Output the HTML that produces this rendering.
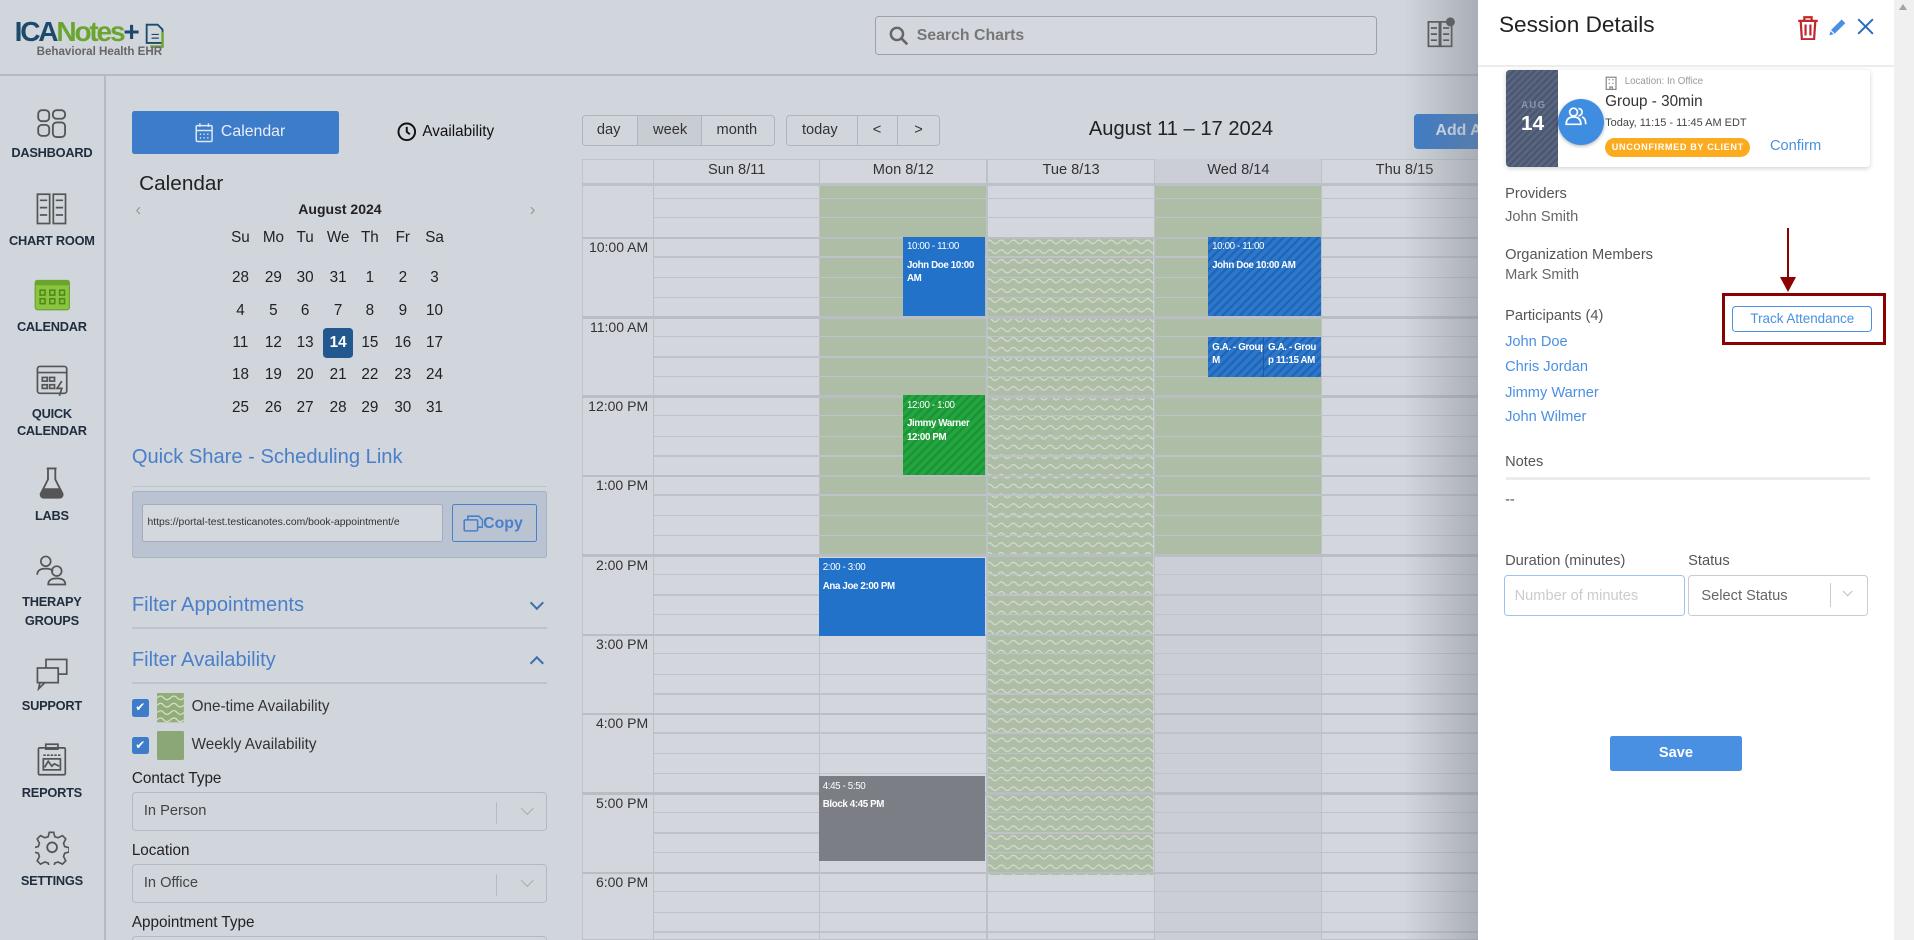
<!DOCTYPE html>
<html><head><meta charset="utf-8"><style>
*{box-sizing:border-box;margin:0;padding:0}
html,body{width:1914px;height:940px;overflow:hidden;background:#d1d5dc}
#w{zoom:1.22066;width:1568px;height:770px;position:relative;font-family:"Liberation Sans",sans-serif;color:#222;background:#d1d5dc;overflow:hidden}
.a{position:absolute}
.nav{position:absolute;left:0;width:85px;text-align:center;font-size:10.5px;color:#1f2d3d;font-weight:bold;letter-spacing:-.2px}
.nav svg{display:block;margin:0 auto 6px}
.md{position:absolute;width:26px;text-align:center;font-size:12.5px;color:#222}
.blue{color:#4a7fc9}
.sel{position:absolute;left:108px;width:340px;height:32px;border:1px solid #b5bac2;border-radius:3px;font-size:12px;color:#444;padding:8px 9px}
.sel:after{content:"";position:absolute;right:40px;top:7px;height:18px;border-left:1px solid #b5bac2}
.chev{position:absolute;right:12px;top:9px;width:7px;height:7px;border-right:1.5px solid #aaa;border-bottom:1.5px solid #aaa;transform:rotate(45deg)}
.hl{position:absolute;width:760px;height:1px}
.ev{position:absolute;color:#fff;font-size:8px;padding:3px;font-weight:bold;letter-spacing:-.3px;line-height:11px}
.ev i{font-style:normal;font-weight:normal;display:block;margin-bottom:4px}
.pl{position:absolute;left:1233px;font-size:12px;color:#555}
</style></head><body><div id="w">
<!-- header -->
<div class="a" style="left:0;top:61px;width:1211px;height:1px;background:#b5b9c0"></div>
<div class="a" style="left:12px;top:13px;font-size:23px;font-weight:bold;letter-spacing:-1.8px;color:#1b4a6b">ICA<span style="color:#6aa52f">Notes</span>+</div>
<svg class="a" style="left:117px;top:17px" width="20" height="22"><path d="M3 3h9l4 4v11H3z" fill="#d1d5dc" stroke="#1b4a6b" stroke-width="1.5"/><path d="M7 11h6M7 14h6" stroke="#1b4a6b"/><path d="M16 9v12H6" fill="none" stroke="#6aa52f" stroke-width="2"/></svg>
<div class="a" style="left:30px;top:38px;font-size:9.5px;color:#666;font-weight:bold">Behavioral Health EHR</div>
<div class="a" style="left:717px;top:13px;width:411px;height:32px;border:1px solid #9ca2ab;border-radius:3px;background:#d4d8de"></div>
<svg class="a" style="left:728px;top:21px" width="16" height="16"><circle cx="6.5" cy="6.5" r="5" fill="none" stroke="#666" stroke-width="2"/><path d="M10 10l5 5" stroke="#666" stroke-width="2.2"/></svg>
<div class="a" style="left:751px;top:22px;font-size:13px;color:#777;font-weight:bold">Search Charts</div>
<svg class="a" style="left:1168px;top:14px" width="24" height="26" fill="none" stroke="#555" stroke-width="1.4"><rect x="2" y="4" width="9" height="20"/><rect x="12" y="4" width="9" height="20"/><path d="M4 9h5M4 14h5M4 19h5M14 9h5M14 14h5M14 19h5"/><circle cx="20" cy="4" r="3" fill="#555"/></svg>
<!-- left nav -->
<div class="a" style="left:85px;top:62px;width:2px;height:708px;background:#b5b9c0"></div>
<div class="nav" style="top:89px"><svg width="24" height="24" fill="none" stroke="#555" stroke-width="1.5"><rect x="1" y="1" width="9" height="9" rx="3"/><rect x="13" y="1" width="10" height="7" rx="3"/><rect x="1" y="13" width="9" height="9" rx="3"/><rect x="13" y="11" width="10" height="12" rx="3"/></svg>DASHBOARD</div>
<div class="nav" style="top:158px"><svg width="28" height="27" fill="none" stroke="#555" stroke-width="1.4"><rect x="2" y="1" width="10" height="24"/><rect x="15" y="1" width="10" height="24"/><path d="M4 6h6M4 12h6M4 18h6M17 6h6M17 12h6M17 18h6"/></svg>CHART ROOM</div>
<div class="nav" style="top:228px"><svg width="30" height="27"><rect x="1" y="2" width="28" height="24" rx="2" fill="#8cc43f" stroke="#6aa52f"/><rect x="1" y="2" width="28" height="4" fill="#6aa52f"/><g fill="none" stroke="#4d8a1c" stroke-width="1.3"><rect x="5" y="10" width="4" height="4"/><rect x="13" y="10" width="4" height="4"/><rect x="21" y="10" width="4" height="4"/><rect x="5" y="17" width="4" height="4"/><rect x="13" y="17" width="4" height="4"/><rect x="21" y="17" width="4" height="4"/></g></svg>CALENDAR</div>
<div class="nav" style="top:298px;line-height:14px"><svg width="28" height="28" fill="none" stroke="#555" stroke-width="1.4"><rect x="2" y="2" width="24" height="22" rx="2"/><path d="M2 7h24"/><rect x="6" y="11" width="4" height="3"/><rect x="12" y="11" width="4" height="3"/><rect x="6" y="17" width="4" height="3"/><rect x="12" y="17" width="4" height="3"/><path d="M22 14l-4 6h4l-2 6"/></svg>QUICK<br>CALENDAR</div>
<div class="nav" style="top:382px"><svg width="24" height="28" fill="none" stroke="#555" stroke-width="1.5"><path d="M8 2h8M9 2v9L3 23q0 3 3 3h12q3 0 3-3L15 11V2"/><path d="M5 19h14l2 4q0 2-3 2H6q-3 0-3-2z" fill="#555"/></svg>LABS</div>
<div class="nav" style="top:454px;line-height:15px"><svg width="26" height="26" fill="none" stroke="#555" stroke-width="1.4"><circle cx="8" cy="6" r="4"/><path d="M1 17q0-5 7-5 4 0 6 2"/><circle cx="17" cy="14" r="4"/><path d="M10 25q0-5 7-5t7 5z"/></svg>THERAPY<br>GROUPS</div>
<div class="nav" style="top:538px"><svg width="28" height="28" fill="none" stroke="#555" stroke-width="1.4"><rect x="9" y="2" width="17" height="12"/><rect x="2" y="9" width="17" height="12" fill="#d1d5dc"/><path d="M4 21l-1 5 5-5"/></svg>SUPPORT</div>
<div class="nav" style="top:609px"><svg width="26" height="28" fill="none" stroke="#555" stroke-width="1.4"><rect x="2" y="4" width="22" height="22" rx="1"/><rect x="8" y="1" width="10" height="4"/><path d="M6 10h14" stroke-dasharray="2 1"/><rect x="6" y="13" width="14" height="9"/><path d="M7 20l3-5 3 4 2-2 4 2"/></svg>REPORTS</div>
<div class="nav" style="top:679px"><svg width="28" height="30" fill="none" stroke="#555" stroke-width="1.5"><path d="M12 2h4l1 4 3 1 4-2 3 3-2 4 1 3 4 1v4l-4 1-1 3 2 4-3 3-4-2-3 1-1 4h-4l-1-4-3-1-4 2-3-3 2-4-1-3-4-1v-4l4-1 1-3-2-4 3-3 4 2 3-1z" transform="scale(.9) translate(1 1)"/><circle cx="14" cy="15" r="4"/></svg>SETTINGS</div>
<!-- left panel -->
<div class="a" style="left:108px;top:91px;width:170px;height:35px;background:#3d7cc9;border-radius:2px;color:#e8eef8;font-size:13px;padding:10px 0 0 73px">Calendar</div>
<svg class="a" style="left:160px;top:100px" width="15" height="17" fill="none" stroke="#dfe8f5" stroke-width="1.2"><rect x="1" y="3" width="13" height="13" rx="1"/><path d="M1 7h13M4 1v3M11 1v3"/><path d="M4 10h1M7 10h1M10 10h1M4 13h1M7 13h1M10 13h1"/></svg>
<svg class="a" style="left:325px;top:100px" width="16" height="16" fill="none" stroke="#111" stroke-width="1.6"><circle cx="8" cy="8" r="6.8"/><path d="M8 4v4l2.5 2"/></svg>
<div class="a" style="left:346px;top:101px;font-size:12.5px;color:#111">Availability</div>
<div class="a" style="left:114px;top:141px;font-size:17px;color:#222">Calendar</div>
<div class="a" style="left:108px;top:165px;width:340px;text-align:center;font-size:11.5px;font-weight:bold;color:#222;padding-left:1px">August 2024</div>
<div class="a" style="left:111px;top:164px;font-size:14px;color:#999">‹</div>
<div class="a" style="left:434px;top:164px;font-size:14px;color:#999">›</div>
<div id="mc"></div>
<div class="a blue" style="left:108px;top:365px;font-size:16.5px">Quick Share - Scheduling Link</div>
<div class="a" style="left:108px;top:398px;width:340px;height:1px;background:#bfc4cc"></div>
<div class="a" style="left:108px;top:402px;width:340px;height:55px;background:#b9c3d2;border:1px solid #a9b2c0;border-radius:2px"></div>
<div class="a" style="left:116px;top:413px;width:247px;height:31px;background:#d3d7de;border:1px solid #aab;border-radius:2px;font-size:8.5px;padding:10px 4px;white-space:nowrap;overflow:hidden;color:#333">https://portal-test.testicanotes.com/book-appointment/e</div>
<div class="a" style="left:370px;top:413px;width:70px;height:31px;border:1px solid #4a7fc9;border-radius:2px;font-size:13px;color:#4a7fc9;padding:8px 0 0 25px;font-weight:bold">Copy</div>
<svg class="a" style="left:379px;top:422px" width="17" height="14" fill="none" stroke="#4a7fc9" stroke-width="1.3"><rect x="1" y="4" width="11" height="9" rx="1"/><path d="M4 4V1h9l3 3v6h-4"/></svg>
<div class="a blue" style="left:108px;top:487px;font-size:16.5px">Filter Appointments</div>
<div class="a" style="left:108px;top:514px;width:340px;height:1px;background:#bfc4cc"></div>
<div class="a" style="left:436px;top:490px;width:8px;height:8px;border-right:2px solid #3d6fae;border-bottom:2px solid #3d6fae;transform:rotate(45deg)"></div>
<div class="a blue" style="left:108px;top:532px;font-size:16.5px">Filter Availability</div>
<div class="a" style="left:108px;top:559px;width:340px;height:1px;background:#bfc4cc"></div>
<div class="a" style="left:436px;top:539px;width:8px;height:8px;border-left:2px solid #3d6fae;border-top:2px solid #3d6fae;transform:rotate(45deg)"></div>
<div class="a" style="left:108px;top:573px;width:14px;height:14px;background:#3d7cc9;border-radius:2px;color:#fff;font-size:10px;text-align:center;line-height:14px">✔</div>
<div class="a" style="left:108px;top:604px;width:14px;height:14px;background:#3d7cc9;border-radius:2px;color:#fff;font-size:10px;text-align:center;line-height:14px">✔</div>
<svg class="a" style="left:129px;top:568px" width="22" height="24"><rect width="22" height="24" fill="#93ad79"/><g fill="none" stroke="#d6e0cc" stroke-width="1"><path d="M0 4q3-3 5.5 0t5.5 0 5.5 0 5.5 0M0 10q3-3 5.5 0t5.5 0 5.5 0 5.5 0M0 16q3-3 5.5 0t5.5 0 5.5 0 5.5 0M0 22q3-3 5.5 0t5.5 0 5.5 0 5.5 0"/></g></svg>
<div class="a" style="left:129px;top:599px;width:22px;height:24px;background:#8ba677;border-radius:1px"></div>
<div class="a" style="left:157px;top:572px;font-size:12.5px;color:#333">One-time Availability</div>
<div class="a" style="left:157px;top:603px;font-size:12.5px;color:#333">Weekly Availability</div>
<div class="a" style="left:108px;top:631px;font-size:12.5px;color:#222">Contact Type</div>
<div class="sel" style="top:649px">In Person<span class="chev"></span></div>
<div class="a" style="left:108px;top:690px;font-size:12.5px;color:#222">Location</div>
<div class="sel" style="top:708px">In Office<span class="chev"></span></div>
<div class="a" style="left:108px;top:749px;font-size:12.5px;color:#222">Appointment Type</div>
<div class="sel" style="top:767px"></div>
<!-- calendar toolbar -->
<div class="a" style="left:477px;top:94px;width:158px;height:26px;border:1px solid #b0b5bd;border-radius:3px;font-size:12px;color:#333"></div>
<div class="a" style="left:522px;top:94px;width:53px;height:26px;background:#c8ccd3;border:1px solid #b0b5bd"></div>
<div class="a" style="left:489px;top:100px;font-size:12px;color:#333">day</div>
<div class="a" style="left:535px;top:100px;font-size:12px;color:#333">week</div>
<div class="a" style="left:587px;top:100px;font-size:12px;color:#333">month</div>
<div class="a" style="left:644px;top:94px;width:126px;height:26px;border:1px solid #b0b5bd;border-radius:3px"></div>
<div class="a" style="left:702px;top:94px;width:34px;height:26px;border-left:1px solid #b0b5bd;border-right:1px solid #b0b5bd"></div>
<div class="a" style="left:657px;top:100px;font-size:12px;color:#333">today</div>
<div class="a" style="left:715px;top:100px;font-size:12px;color:#333">&lt;</div>
<div class="a" style="left:749px;top:100px;font-size:12px;color:#333">&gt;</div>
<div class="a" style="left:892px;top:97px;font-size:16.5px;color:#222">August 11 – 17 2024</div>
<div class="a" style="left:1158px;top:93px;width:80px;height:29px;background:#3d7cc9;border-radius:3px;color:#dce7f5;font-size:13px;font-weight:bold;padding:7px 18px">Add A</div>
<!-- grid -->
<div class="a" style="left:477px;top:130px;width:760px;height:640px;background:#d3d6dc;border:1px solid #bfc3ca"></div>
<div class="a" style="left:945px;top:130px;width:137px;height:640px;background:#cbced6"></div>
<div class="a" style="left:671px;top:150px;width:137px;height:304px;background:#aebda6"></div>
<div class="a" style="left:945px;top:150px;width:137px;height:304px;background:#aebda6"></div>
<svg class="a" style="left:808px;top:194px" width="137" height="523"><defs><pattern id="wv" width="10" height="8" patternUnits="userSpaceOnUse"><rect width="10" height="8" fill="#aebda6"/><path d="M0 4q2.5-3 5 0t5 0" fill="none" stroke="#d5dccf" stroke-width="1"/></pattern></defs><rect width="137" height="523" fill="url(#wv)"/></svg>
<div id="lines"></div>
<div class="a" style="left:477px;top:150px;width:760px;height:2px;background:#bcc0c7"></div>
<div class="a" style="left:535px;top:130px;width:1px;height:640px;background:#bcc0c7"></div>
<div class="a" style="left:671px;top:130px;width:1px;height:640px;background:#bcc0c7"></div>
<div class="a" style="left:808px;top:130px;width:1px;height:640px;background:#bcc0c7"></div>
<div class="a" style="left:945px;top:130px;width:1px;height:640px;background:#bcc0c7"></div>
<div class="a" style="left:1082px;top:130px;width:1px;height:640px;background:#bcc0c7"></div>
<div class="a" style="left:580px;top:133px;font-size:12px;color:#333">Sun 8/11</div>
<div class="a" style="left:715px;top:133px;font-size:12px;color:#333">Mon 8/12</div>
<div class="a" style="left:854px;top:133px;font-size:12px;color:#333">Tue 8/13</div>
<div class="a" style="left:989px;top:133px;font-size:12px;color:#333">Wed 8/14</div>
<div class="a" style="left:1127px;top:133px;font-size:12px;color:#333">Thu 8/15</div>
<div id="tl"></div>
<div class="ev" style="left:740px;top:194px;width:67px;height:65px;background:#2272c9"><i>10:00 - 11:00</i>John Doe 10:00 AM</div>
<div class="ev" style="left:990px;top:194px;width:92px;height:65px;background:repeating-linear-gradient(135deg,#2e78cc 0 3px,#2066b8 3px 5px)"><i>10:00 - 11:00</i>John Doe 10:00 AM</div>
<div class="ev" style="left:990px;top:276px;width:50px;height:33px;background:repeating-linear-gradient(135deg,#2e78cc 0 3px,#2066b8 3px 5px);padding-top:3px">G.A. - Group M</div>
<div class="ev" style="left:1035px;top:276px;width:47px;height:33px;background:repeating-linear-gradient(135deg,#2e78cc 0 3px,#2066b8 3px 5px);padding-top:3px;border-left:1px solid #1d5aa0">G.A. - Grou p 11:15 AM</div>
<div class="ev" style="left:740px;top:324px;width:67px;height:65px;background:repeating-linear-gradient(135deg,#22a63f 0 3px,#1d9236 3px 5px)"><i>12:00 - 1:00</i>Jimmy Warner 12:00 PM</div>
<div class="ev" style="left:671px;top:457px;width:136px;height:64px;background:#2272c9"><i>2:00 - 3:00</i>Ana Joe 2:00 PM</div>
<div class="ev" style="left:671px;top:636px;width:136px;height:69px;background:#7b7e85"><i>4:45 - 5:50</i>Block 4:45 PM</div>
<div class="a" style="left:1150px;top:0;width:62px;height:770px;background:linear-gradient(90deg,rgba(120,125,135,0),rgba(120,125,135,.45))"></div>
<!-- side panel -->
<div class="a" style="left:1211px;top:0;width:342px;height:770px;background:#fff"></div>
<div class="a" style="left:1552px;top:0;width:16px;height:770px;background:#f0f0f0"></div>
<div class="a" style="left:1556px;top:3px;width:0;height:0;border:4px solid transparent;border-bottom:5px solid #a3a3a3;border-top:0"></div>
<div class="a" style="left:1228px;top:10px;font-size:18.5px;color:#222">Session Details</div>
<svg class="a" style="left:1472px;top:13px" width="18" height="20" fill="none" stroke="#c0272d" stroke-width="1.8"><path d="M1 4h16M6 4V1h6v3M3 4l1 15h10l1-15M7 7v9M11 7v9"/></svg>
<svg class="a" style="left:1497px;top:14px" width="17" height="17"><path d="M2 15l1-4 9-9 3 3-9 9z" fill="#4a90e2"/><path d="M3 11l3 3" stroke="#fff"/></svg>
<svg class="a" style="left:1521px;top:15px" width="14" height="14" stroke="#2a6bc0" stroke-width="1.6"><path d="M1 1l12 12M13 1L1 13"/></svg>
<div class="a" style="left:1211px;top:53px;width:341px;height:2px;background:#ececec"></div>
<div class="a" style="left:1234px;top:57px;width:298px;height:80px;background:#fff;box-shadow:0 1px 4px rgba(0,0,0,.18);border-radius:3px"></div>
<div class="a" style="left:1234px;top:57px;width:42px;height:80px;background:repeating-linear-gradient(135deg,#4b5670 0 2px,#5a6580 2px 4px);border-radius:3px 0 0 3px"></div>
<div class="a" style="left:1246px;top:82px;font-size:8px;color:#8b93a7;font-weight:bold;letter-spacing:1px">AUG</div>
<div class="a" style="left:1246px;top:92px;font-size:17px;color:#fff;font-weight:bold">14</div>
<div class="a" style="left:1276px;top:99px;width:38px;height:38px;margin-top:-18px;background:#3f8de0;border-radius:50%;box-shadow:0 1px 3px rgba(0,0,0,.3)"></div>
<svg class="a" style="left:1282px;top:87px" width="18" height="16" fill="none" stroke="#fff" stroke-width="1.4"><circle cx="7" cy="5" r="3.2"/><path d="M1 15q0-6 6-6t6 6zM11 2a3 3 0 0 1 0 6M14 9q3 1 3 6"/></svg>
<svg class="a" style="left:1315px;top:62px" width="10" height="12" fill="none" stroke="#888"><rect x="1" y="1" width="8" height="10"/><path d="M3 3h1M6 3h1M3 6h1M6 6h1M4 11V9h2v2"/></svg>
<div class="a" style="left:1331px;top:62px;font-size:8px;color:#999">Location: In Office</div>
<div class="a" style="left:1315px;top:76px;font-size:12.5px;color:#333">Group - 30min</div>
<div class="a" style="left:1315px;top:96px;font-size:9px;color:#444">Today, 11:15 - 11:45 AM EDT</div>
<div class="a" style="left:1315px;top:113px;width:119px;height:16px;background:#fbab1d;border-radius:8px;color:#fff;font-size:7.5px;font-weight:bold;text-align:center;line-height:16px;letter-spacing:.5px">UNCONFIRMED BY CLIENT</div>
<div class="a" style="left:1450px;top:113px;font-size:12px;color:#4a90e2">Confirm</div>
<div class="pl" style="top:152px">Providers</div>
<div class="pl" style="top:171px;color:#666">John Smith</div>
<div class="pl" style="top:202px">Organization Members</div>
<div class="pl" style="top:219px;color:#666">Mark Smith</div>
<div class="pl" style="top:252px">Participants (4)</div>
<div class="pl" style="top:274px;color:#4a90e2">John Doe</div>
<div class="pl" style="top:294px;color:#4a90e2">Chris Jordan</div>
<div class="pl" style="top:315px;color:#4a90e2">Jimmy Warner</div>
<div class="pl" style="top:335px;color:#4a90e2">John Wilmer</div>
<div class="a" style="left:1464px;top:187px;width:2px;height:42px;background:#8b0000"></div>
<div class="a" style="left:1458px;top:227px;width:0;height:0;border-left:7px solid transparent;border-right:7px solid transparent;border-top:13px solid #8b0000"></div>
<div class="a" style="left:1411px;top:240px;width:134px;height:43px;border:3px solid #8b0000"></div>
<div class="a" style="left:1419px;top:251px;width:115px;height:21px;border:1px solid #4a90e2;border-radius:3px;font-size:11px;color:#4a90e2;text-align:center;line-height:19px">Track Attendance</div>
<div class="pl" style="top:372px">Notes</div>
<div class="a" style="left:1234px;top:391px;width:298px;height:2px;background:#ececec"></div>
<div class="pl" style="top:403px">--</div>
<div class="pl" style="top:453px">Duration (minutes)</div>
<div class="a" style="left:1383px;top:453px;font-size:12px;color:#555">Status</div>
<div class="a" style="left:1232px;top:471px;width:148px;height:34px;border:1px solid #9cc3ee;border-radius:3px;font-size:12px;color:#ccc;padding:10px 8px">Number of minutes</div>
<div class="a" style="left:1383px;top:471px;width:147px;height:34px;border:1px solid #ccc;border-radius:3px;font-size:12px;color:#666;padding:10px 10px">Select Status</div>
<div class="a" style="left:1499px;top:478px;width:1px;height:19px;background:#ccc"></div>
<div class="a" style="left:1511px;top:482px;width:6px;height:6px;border-right:1.5px solid #bbb;border-bottom:1.5px solid #bbb;transform:rotate(45deg)"></div>
<div class="a" style="left:1319px;top:603px;width:108px;height:29px;background:#4a90e2;border-radius:2px;color:#fff;font-size:12px;font-weight:bold;text-align:center;line-height:29px">Save</div>
</div>
<script>
var h='';
var cols=[197,224,250,277,303,330,356];
var hd=['Su','Mo','Tu','We','Th','Fr','Sa'];
hd.forEach(function(t,i){h+='<div class="md" style="left:'+(cols[i]-13)+'px;top:188px">'+t+'</div>'});
var rows=[[28,29,30,31,1,2,3],[4,5,6,7,8,9,10],[11,12,13,14,15,16,17],[18,19,20,21,22,23,24],[25,26,27,28,29,30,31]];
var ry=[220,247,274,300,327];
rows.forEach(function(r,j){r.forEach(function(d,i){
 if(d==14&&j==2)h+='<div class="a" style="left:'+(cols[i]-12)+'px;top:'+(ry[j]-5)+'px;width:24px;height:24px;background:#23588e;border-radius:3px;color:#fff;font-weight:bold;font-size:12.5px;text-align:center;line-height:24px">14</div>';
 else h+='<div class="md" style="left:'+(cols[i]-13)+'px;top:'+ry[j]+'px">'+d+'</div>';
})});
document.getElementById('mc').outerHTML=h;
var l='';
for(var k=-2;k<37;k++){var y=194+k*16.25;var hr=(k%4==0);
 l+='<div class="hl" style="top:'+Math.round(y)+'px;background:'+(hr?'#b9bdc4;height:2px':'#bfc3c9')+';left:'+(hr?477:535)+'px"></div>';}
document.getElementById('lines').outerHTML=l;
var t='',tt=['10:00 AM','11:00 AM','12:00 PM','1:00 PM','2:00 PM','3:00 PM','4:00 PM','5:00 PM','6:00 PM'];
tt.forEach(function(s,i){t+='<div class="a" style="left:477px;width:54px;text-align:right;top:'+(196+i*65)+'px;font-size:11.5px;color:#333">'+s+'</div>'});
document.getElementById('tl').outerHTML=t;
</script>
</body></html>
